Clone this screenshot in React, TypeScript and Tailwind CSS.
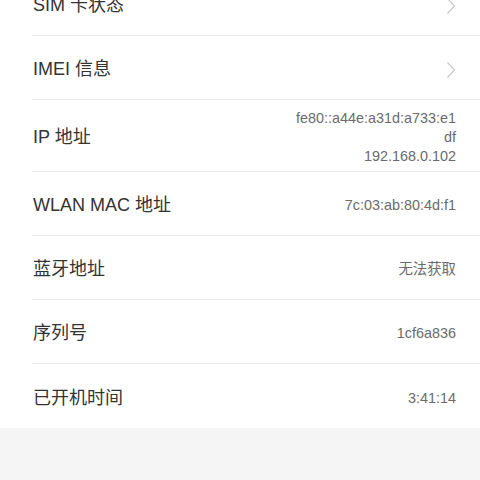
import React from 'react'

type Row = {
  label: string
  value?: string[]
  arrow?: boolean
}

const rows: Row[] = [
  { label: 'SIM 卡状态', arrow: true },
  { label: 'IMEI 信息', arrow: true },
  { label: 'IP 地址', value: ['fe80::a44e:a31d:a733:e1', 'df', '192.168.0.102'] },
  { label: 'WLAN MAC 地址', value: ['7c:03:ab:80:4d:f1'] },
  { label: '蓝牙地址', value: ['无法获取'] },
  { label: '序列号', value: ['1cf6a836'] },
  { label: '已开机时间', value: ['3:41:14'] },
]

function Chevron() {
  return (
    <svg width="10" height="18" viewBox="0 0 10 18" fill="none" className="shrink-0">
      <path d="M1.5 1.5 L8.5 9 L1.5 16.5" stroke="#c4c4c4" strokeWidth="1.1" />
    </svg>
  )
}

export default function App() {
  return (
    <div
      className="w-[480px] h-[480px] overflow-hidden bg-[#f5f5f5]"
      style={{ fontFamily: '"Liberation Sans", "Noto Sans CJK SC", sans-serif' }}
    >
      <div className="bg-white -mt-[28px] pl-[32px]">
        {rows.map((row, i) => (
          <div
            key={row.label}
            className={`flex items-center justify-between pr-[24px] min-h-[64px] pt-[9px] pb-[5px] ${
              i < rows.length - 1 ? 'border-b border-[#ececec]' : ''
            }`}
          >
            <span className="text-[18px] text-[#333333] pl-[1px]">{row.label}</span>
            {row.arrow ? (
              <Chevron />
            ) : (
              <div className="flex flex-col items-end text-[14.4px] leading-[19px] text-[#6b6b6b]">
                {row.value?.map((v) => (
                  <span key={v}>{v}</span>
                ))}
              </div>
            )}
          </div>
        ))}
      </div>
    </div>
  )
}
